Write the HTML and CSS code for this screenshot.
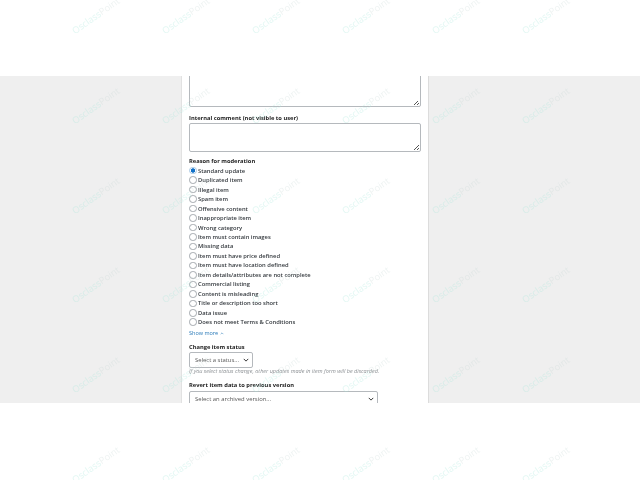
FILE: index.html
```html
<!DOCTYPE html>
<html lang="en">
<head>
<meta charset="utf-8">
<title>Moderate item</title>
<link rel="stylesheet" href="styles.css">
</head>
<body>
<div class="top"></div>
<main class="band">
  <form class="card">
    <div class="area first"><span class="grip"></span></div>
    <label class="lbl gap-a">Internal comment (not visible to user)</label>
    <div class="area second"><span class="grip"></span></div>
    <div class="lbl gap-b">Reason for moderation</div>
    <ul class="radios">
      <li><span class="radio on"></span>Standard update</li>
      <li><span class="radio"></span>Duplicated item</li>
      <li><span class="radio"></span>Illegal item</li>
      <li><span class="radio"></span>Spam item</li>
      <li><span class="radio"></span>Offensive content</li>
      <li><span class="radio"></span>Inappropriate item</li>
      <li><span class="radio"></span>Wrong category</li>
      <li><span class="radio"></span>Item must contain images</li>
      <li><span class="radio"></span>Missing data</li>
      <li><span class="radio"></span>Item must have price defined</li>
      <li><span class="radio"></span>Item must have location defined</li>
      <li><span class="radio"></span>Item details/attributes are not complete</li>
      <li><span class="radio"></span>Commercial listing</li>
      <li><span class="radio"></span>Content is misleading</li>
      <li><span class="radio"></span>Title or description too short</li>
      <li><span class="radio"></span>Data issue</li>
      <li><span class="radio"></span>Does not meet Terms &amp; Conditions</li>
    </ul>
    <a class="more">Show more <svg class="caret" viewBox="0 0 6 4"><path d="M1 3l2-2 2 2" fill="none" stroke="#2a7ab8" stroke-width=".8"/></svg></a>
    <div class="lbl gap-c">Change item status</div>
    <div class="select status">Select a status...<svg class="chev" viewBox="0 0 8 5"><path d="M1 1l3 3 3-3" fill="none" stroke="#222" stroke-width="1.2"/></svg></div>
    <p class="hint">If you select status change, other updates made in item form will be discarded.</p>
    <div class="lbl gap-d">Revert item data to previous version</div>
    <div class="select archive">Select an archived version...<svg class="chev" viewBox="0 0 8 5"><path d="M1 1l3 3 3-3" fill="none" stroke="#222" stroke-width="1.2"/></svg></div>
  </form>
</main>
<div class="marks" aria-hidden="true">
  <span>Osclass<i>Point</i></span><span>Osclass<i>Point</i></span><span>Osclass<i>Point</i></span><span>Osclass<i>Point</i></span><span>Osclass<i>Point</i></span><span>Osclass<i>Point</i></span>
  <span>Osclass<i>Point</i></span><span>Osclass<i>Point</i></span><span>Osclass<i>Point</i></span><span>Osclass<i>Point</i></span><span>Osclass<i>Point</i></span><span>Osclass<i>Point</i></span>
  <span>Osclass<i>Point</i></span><span>Osclass<i>Point</i></span><span>Osclass<i>Point</i></span><span>Osclass<i>Point</i></span><span>Osclass<i>Point</i></span><span>Osclass<i>Point</i></span>
  <span>Osclass<i>Point</i></span><span>Osclass<i>Point</i></span><span>Osclass<i>Point</i></span><span>Osclass<i>Point</i></span><span>Osclass<i>Point</i></span><span>Osclass<i>Point</i></span>
  <span>Osclass<i>Point</i></span><span>Osclass<i>Point</i></span><span>Osclass<i>Point</i></span><span>Osclass<i>Point</i></span><span>Osclass<i>Point</i></span><span>Osclass<i>Point</i></span>
  <span>Osclass<i>Point</i></span><span>Osclass<i>Point</i></span><span>Osclass<i>Point</i></span><span>Osclass<i>Point</i></span><span>Osclass<i>Point</i></span><span>Osclass<i>Point</i></span>
</div>
</body>
</html>
```
FILE: styles.css
```css
* { box-sizing: border-box; }
html, body { margin: 0; height: 100%; background: #fff; overflow: hidden; }
body { font-family: "Open Sans", "Liberation Sans", sans-serif; font-size: 5.8px; color: #222; }
.top { height: 76px; }
.band { height: 327px; background: #efefef; overflow: hidden; }
.card { width: 248px; margin-left: 181px; height: 360px; background: #fff; border-left: 1px solid #e2e2e2; border-right: 1px solid #dcdcdc; padding: 0 7px; filter: blur(0.3px); }
.area { position: relative; border: 1px solid #b5b9bd; border-radius: 2px; background: #fff; width: 232px; }
.first { height: 40px; margin-top: -9px; }
.second { height: 29px; }
.grip { position: absolute; right: 1px; bottom: 1px; width: 5px; height: 5px; background: linear-gradient(135deg, transparent 50%, #555 50%, #555 60%, transparent 60%, transparent 75%, #555 75%, #555 85%, transparent 85%); }
.lbl { display: block; font-weight: 700; line-height: 10px; color: #1c1c1c; font-size: 5.75px; }
.gap-a { margin-top: 6px; }
.gap-b { margin-top: 5px; line-height: 9px; }
.gap-c { margin-top: 4px; }
.gap-d { margin-top: 6px; }
.radios { list-style: none; margin: 0; padding: 0; }
.radios li { display: flex; align-items: center; height: 9.47px; font-weight: 600; color: #33383d; gap: 1.5px; white-space: nowrap; }
.radio { width: 7.5px; height: 7.5px; flex: none; border-radius: 50%; border: 1px solid #a4a9ae; background: #fff; }
.radio.on { border-color: #a9c8e4; background: radial-gradient(circle, #1272c8 0 1.9px, #fff 2.5px); }
.more { display: block; color: #2a7ab8; font-size: 5.5px; line-height: 10px; margin-top: 1px; }
.caret { width: 4px; height: 3px; }
.select { position: relative; display: flex; align-items: center; height: 16px; padding-left: 5px; border: 1px solid #b5b9bd; border-radius: 2px; background: #fff; color: #555; font-size: 5.9px; }
.status { width: 64px; }
.archive { width: 189px; margin-top: 1px; }
.chev { position: absolute; right: 3px; top: 5.5px; width: 6px; height: 4px; }
.hint { margin: 0; font-size: 5.5px; line-height: 6px; font-style: italic; color: #8c9094; }
.marks { position: fixed; top: 0; left: 51px; width: 540px; display: grid; grid-template-columns: repeat(6, 90px); grid-auto-rows: 89.8px; pointer-events: none; }
.marks span { display: block; width: 90px; height: 32px; font-size: 9.4px; line-height: 32px; text-align: center; white-space: nowrap; color: rgba(170, 232, 220, .34); transform: rotate(-35deg); }
.marks i { font-style: normal; color: rgba(200, 215, 212, .3); }
```
